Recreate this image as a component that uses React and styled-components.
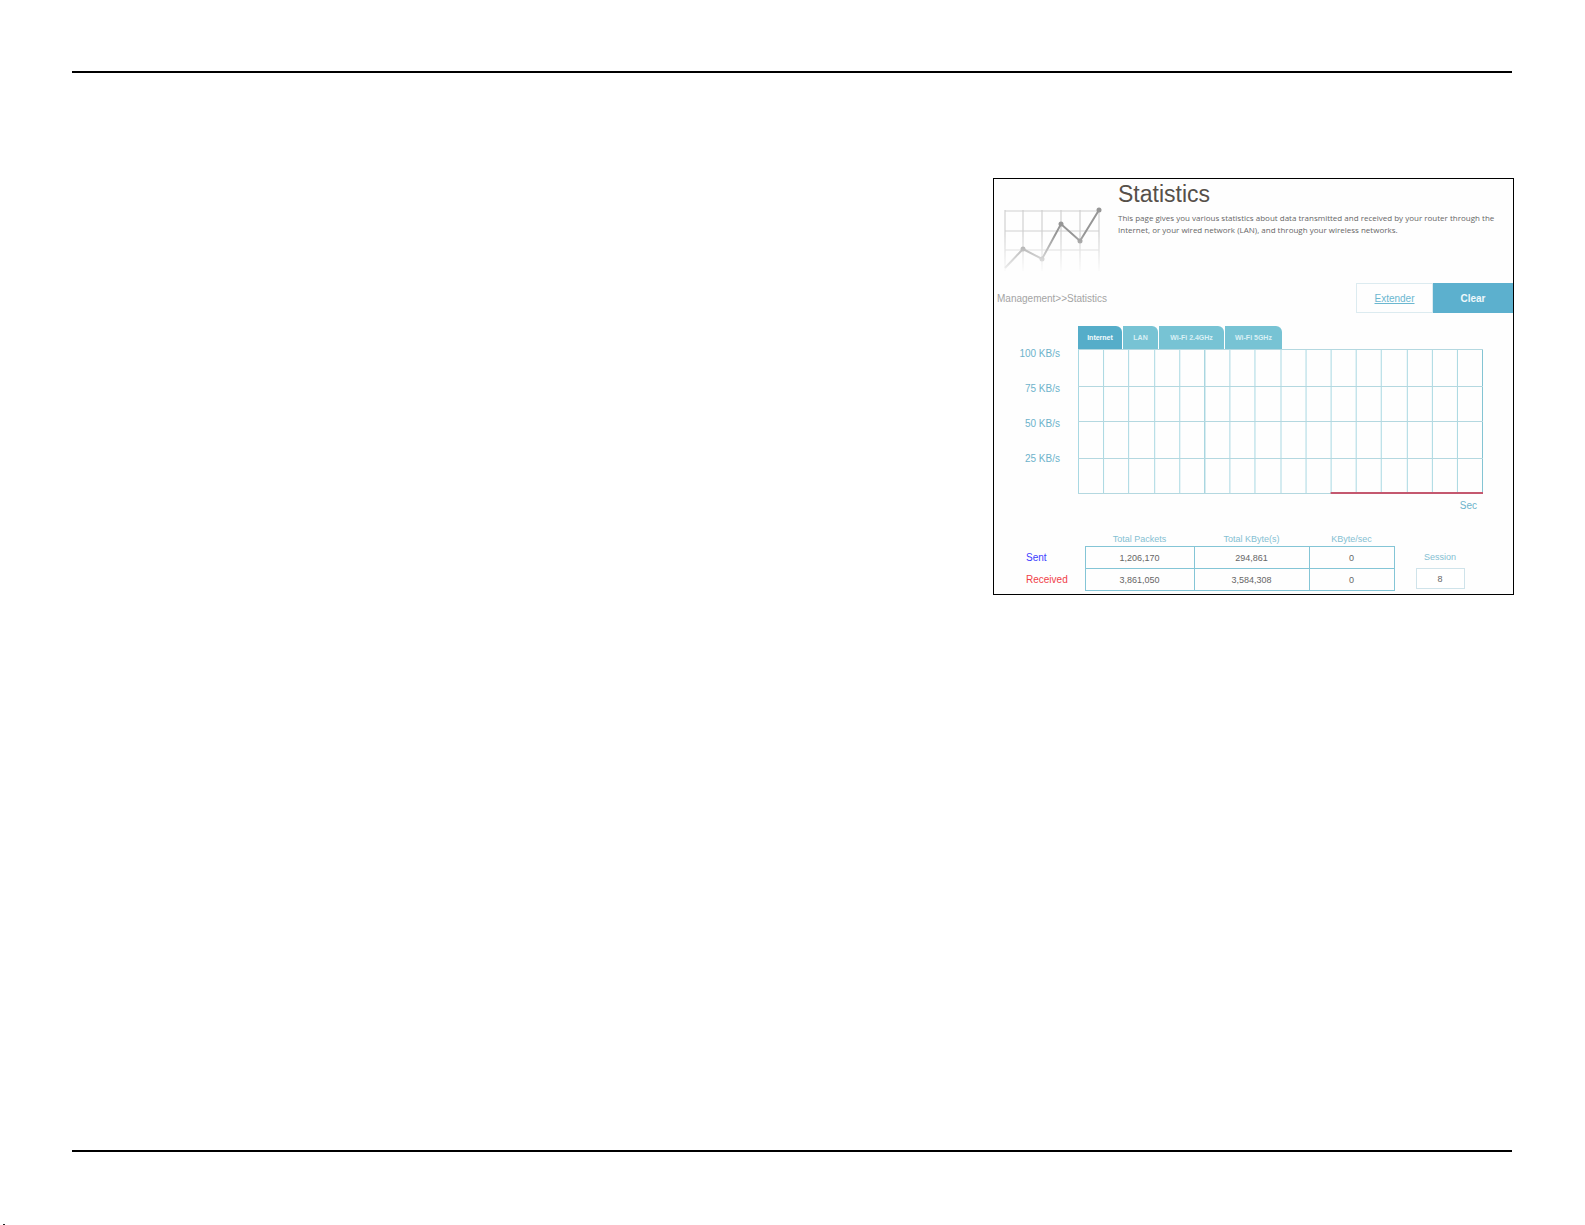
import React from "react";
import styled, { createGlobalStyle } from "styled-components";

const GlobalStyle = createGlobalStyle`
  *, *::before, *::after { box-sizing: border-box; }
  body {
    margin: 0;
    background: #fff;
    font-family: "Liberation Sans", Arial, sans-serif;
  }
`;

const Page = styled.div`
  display: flex;
  flex-direction: column;
  min-height: 100vh;
  padding: 71px 73px 0 72px;
`;

const Rule = styled.hr`
  width: 100%;
  height: 2px;
  margin: 0;
  border: 0;
  background: #000;
`;

const Main = styled.main`
  flex: 1;
  padding-top: 105px;
`;

const Footer = styled.footer`
  display: flex;
  align-items: flex-end;
  height: 73px;
  margin-left: -72px;
  padding-left: 3px;
`;

const Tick = styled.span`
  width: 2px;
  height: 1px;
  background: #222;
`;

const Panel = styled.section`
  width: 100%;
  max-width: 521px;
  margin: 0 -2px 0 auto;
  padding-bottom: 3px;
  border: 1px solid #000;
  overflow: hidden;
  background: #fefefe;
`;

const Header = styled.header`
  display: flex;
  gap: 16px;
  height: 96px;
  padding: 2px 12px 0 8px;
`;

const ChartIcon = styled.svg`
  flex: none;
  width: 100px;
  height: 68px;
  margin-top: 26px;
`;

const Title = styled.h1`
  margin: 0;
  font-size: 23px;
  line-height: 27px;
  font-weight: 400;
  color: #56504a;
`;

const Description = styled.p`
  margin: 4px 0 0;
  font-family: "Open Sans", "Liberation Sans", sans-serif;
  font-size: 8px;
  line-height: 12px;
  color: #666;
`;

const Bar = styled.nav`
  display: flex;
  align-items: center;
  height: 46px;
  padding-left: 3px;
`;

const Crumb = styled.span`
  flex: 1;
  font-size: 10px;
  color: #a4a4a4;
`;

const Extender = styled.a`
  display: flex;
  align-items: center;
  justify-content: center;
  width: 77px;
  height: 30px;
  border: 1px solid #dcebf0;
  font-size: 10px;
  color: #6bb7d0;
`;

const Clear = styled.button`
  width: 80px;
  height: 30px;
  padding: 0;
  border: 0;
  background: #5cb0ce;
  font: bold 10px "Liberation Sans", Arial, sans-serif;
  color: #eef8fb;
`;

const Graph = styled.div`
  display: grid;
  grid-template-columns: 66px 1fr;
  column-gap: 18px;
  padding: 5px 30px 0 0;
`;

const Tabs = styled.div`
  grid-column: 2;
  display: flex;
  gap: 1px;
`;

const Tab = styled.button`
  width: ${(p) => p.$width}px;
  height: 23px;
  padding: 0;
  border: 0;
  border-radius: 0 6px 0 0;
  background: ${(p) => (p.$active ? "#55adc9" : "#77c3d4")};
  font: bold 7px "Liberation Sans", Arial, sans-serif;
  color: ${(p) => (p.$active ? "#f4fbfd" : "#d9f0f4")};
`;

const Scale = styled.div`
  display: flex;
  flex-direction: column;
  gap: 25px;
  font-size: 10px;
  line-height: 10px;
  text-align: right;
  color: #6db3cb;
`;

const Plot = styled.svg`
  display: block;
  width: 100%;
  height: 146px;
`;

const Unit = styled.div`
  grid-column: 2;
  padding-right: 6px;
  font-size: 10px;
  line-height: 22px;
  text-align: right;
  color: #6db3cb;
`;

const Totals = styled.div`
  display: flex;
  align-items: flex-start;
  gap: 21px;
  padding: 15px 0 0 32px;
`;

const Table = styled.table`
  border-collapse: collapse;
  table-layout: fixed;
  width: 368px;
`;

const Column = styled.th`
  width: ${(p) => p.$width}px;
  height: 14px;
  padding: 0;
  font-size: 9px;
  line-height: 14px;
  font-weight: 400;
  color: #84c0d2;
`;

const RowName = styled.th`
  padding: 0;
  font-size: 10px;
  font-weight: 400;
  text-align: left;
  color: ${(p) => p.$color};
`;

const Cell = styled.td`
  height: 22px;
  padding: 0;
  border: 1px solid #84c5d6;
  font-size: 9px;
  text-align: center;
  color: #666;
`;

const Session = styled.label`
  display: flex;
  flex-direction: column;
  align-items: center;
  gap: 5px;
  padding-top: 19px;
  font-size: 9px;
  line-height: 12px;
  color: #84c0d2;
`;

const SessionCount = styled.input`
  width: 49px;
  height: 21px;
  padding: 0;
  border: 1px solid #cfe3ea;
  background: #fff;
  font: 9px "Liberation Sans", Arial, sans-serif;
  text-align: center;
  color: #666;
`;

const tabs = [
  { name: "Internet", width: 44 },
  { name: "LAN", width: 35 },
  { name: "Wi-Fi 2.4GHz", width: 65 },
  { name: "Wi-Fi 5GHz", width: 57 },
];

const rows = [
  { name: "Sent", color: "#4040ff", cells: ["1,206,170", "294,861", "0"] },
  { name: "Received", color: "#f04048", cells: ["3,861,050", "3,584,308", "0"] },
];

const points = [[3, 61], [21, 42], [40, 52], [59, 17], [78, 34], [97, 3]];

function StatisticsIcon() {
  return (
    <ChartIcon viewBox="0 0 100 68" aria-hidden="true">
      <defs>
        <linearGradient id="fade" x1="0" y1="0" x2="0" y2="1">
          <stop offset="0.4" stopColor="#fff" />
          <stop offset="1" stopColor="#000" />
        </linearGradient>
        <mask id="fadeMask">
          <rect width="100" height="68" fill="url(#fade)" />
        </mask>
      </defs>
      <g mask="url(#fadeMask)" fill="none">
        <g stroke="#d0d0d0" strokeWidth="1.2">
          {[3, 21, 40, 59, 78, 97].map((x) => (
            <path key={x} d={`M${x} 3V64`} />
          ))}
          {[4, 24, 43].map((y) => (
            <path key={y} d={`M3 ${y}H97`} />
          ))}
        </g>
        <polyline
          points={points.map((p) => p.join(",")).join(" ")}
          stroke="#969696"
          strokeWidth="2"
        />
        {points.slice(1).map(([x, y]) => (
          <circle key={x} cx={x} cy={y} r="2.5" fill="#969696" />
        ))}
      </g>
    </ChartIcon>
  );
}

function Traffic() {
  return (
    <Plot viewBox="0 0 404 146" preserveAspectRatio="none" aria-label="Traffic">
      <g stroke="#a9d8e2" strokeWidth="1">
        {Array.from({ length: 17 }, (_, i) => {
          const x = Math.min(403, Math.round(i * 25.2)) + 0.5;
          return (
            <path key={i} d={`M${x} 0V145`} stroke={i === 5 || i === 16 ? "#83c4d3" : undefined} />
          );
        })}
        {[0, 37, 72, 109, 144].map((y) => (
          <path key={y} d={`M0 ${y + 0.5}H404`} stroke="#b4d8e0" />
        ))}
      </g>
      <path d="M252 144H404" stroke="#c4586f" strokeWidth="2" />
    </Plot>
  );
}

export default function App() {
  return (
    <>
      <GlobalStyle />
      <Page>
        <Rule />
        <Main>
          <Panel>
            <Header>
              <StatisticsIcon />
              <div>
                <Title>Statistics</Title>
                <Description>
                  This page gives you various statistics about data transmitted and received by your
                  router through the Internet, or your wired network (LAN), and through your
                  wireless networks.
                </Description>
              </div>
            </Header>
            <Bar>
              <Crumb>Management&gt;&gt;Statistics</Crumb>
              <Extender href="#extender">Extender</Extender>
              <Clear type="button">Clear</Clear>
            </Bar>
            <Graph>
              <Tabs>
                {tabs.map((tab, i) => (
                  <Tab key={tab.name} type="button" $width={tab.width} $active={i === 0}>
                    {tab.name}
                  </Tab>
                ))}
              </Tabs>
              <Scale>
                {[100, 75, 50, 25].map((n) => (
                  <span key={n}>{n} KB/s</span>
                ))}
              </Scale>
              <Traffic />
              <Unit>Sec</Unit>
            </Graph>
            <Totals>
              <Table>
                <thead>
                  <tr>
                    <Column as="td" $width={59} />
                    <Column $width={109} scope="col">Total Packets</Column>
                    <Column $width={115} scope="col">Total KByte(s)</Column>
                    <Column $width={85} scope="col">KByte/sec</Column>
                  </tr>
                </thead>
                <tbody>
                  {rows.map((row) => (
                    <tr key={row.name}>
                      <RowName scope="row" $color={row.color}>{row.name}</RowName>
                      {row.cells.map((cell, i) => (
                        <Cell key={i}>{cell}</Cell>
                      ))}
                    </tr>
                  ))}
                </tbody>
              </Table>
              <Session>
                Session
                <SessionCount readOnly value="8" />
              </Session>
            </Totals>
          </Panel>
        </Main>
        <Rule />
        <Footer>
          <Tick />
        </Footer>
      </Page>
    </>
  );
}
